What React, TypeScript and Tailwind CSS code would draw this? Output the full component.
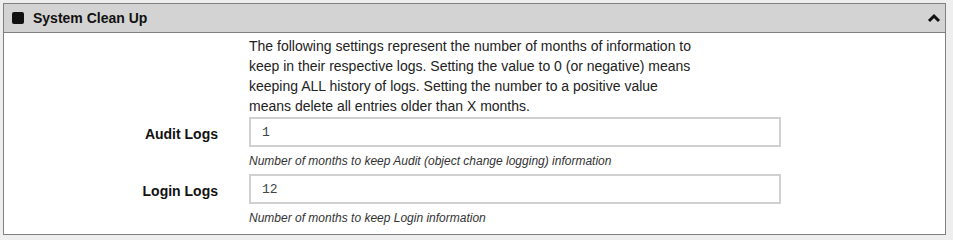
const Row = ({ label, value, help }: { label: string; value: string; help: string }) => {
    return (
        <div className="flex">
            <label className="w-[214px] text-right font-bold text-[14px] text-[#111] pt-[7px]">{label}</label>
            <div className="ml-[31px] flex flex-col">
                <input
                    type="text"
                    defaultValue={value}
                    className="w-[532px] h-[30px] border-2 border-[#d0d0d0] outline-0 px-[11px] text-[13px] text-[#444] bg-white"
                    style={{ fontFamily: '"Liberation Mono", monospace' }}
                />
                <p className="italic text-[12px] text-[#333] leading-[16px] mt-[6px] mb-[5px]">{help}</p>
            </div>
        </div>
    )
}

const App = () => {
    return (
        <div className="w-[953px] h-[240px] bg-[#eeeeee] p-[3px]" style={{ fontFamily: '"Liberation Sans", Arial, sans-serif' }}>
            <div className="w-[943px] border border-[#808080] bg-white">
                <div className="h-[29px] bg-[#d3d3d3] border-b border-[#808080] flex items-center pl-[8px] pr-[4px]">
                    <span className="w-[12px] h-[12px] bg-[#111] rounded-[2px]" />
                    <span className="ml-[9px] font-bold text-[14px] text-[#111]">System Clean Up</span>
                    <svg className="ml-auto" width="14" height="10" viewBox="0 0 14 10">
                        <polyline points="2,8 7,3 12,8" fill="none" stroke="#111" strokeWidth="3" />
                    </svg>
                </div>
                <div className="pt-[3px] pb-[3px]">
                    <p className="ml-[245px] w-[450px] text-[14px] leading-[20px] text-[#222]">
                        The following settings represent the number of months of information to keep in their respective logs. Setting the value to 0 (or negative) means keeping ALL history of logs. Setting the number to a positive value means delete all entries older than X months.
                    </p>
                    <div className="mt-[1px]">
                        <Row label="Audit Logs" value="1" help="Number of months to keep Audit (object change logging) information" />
                        <Row label="Login Logs" value="12" help="Number of months to keep Login information" />
                    </div>
                </div>
            </div>
        </div>
    )
}

export default App
